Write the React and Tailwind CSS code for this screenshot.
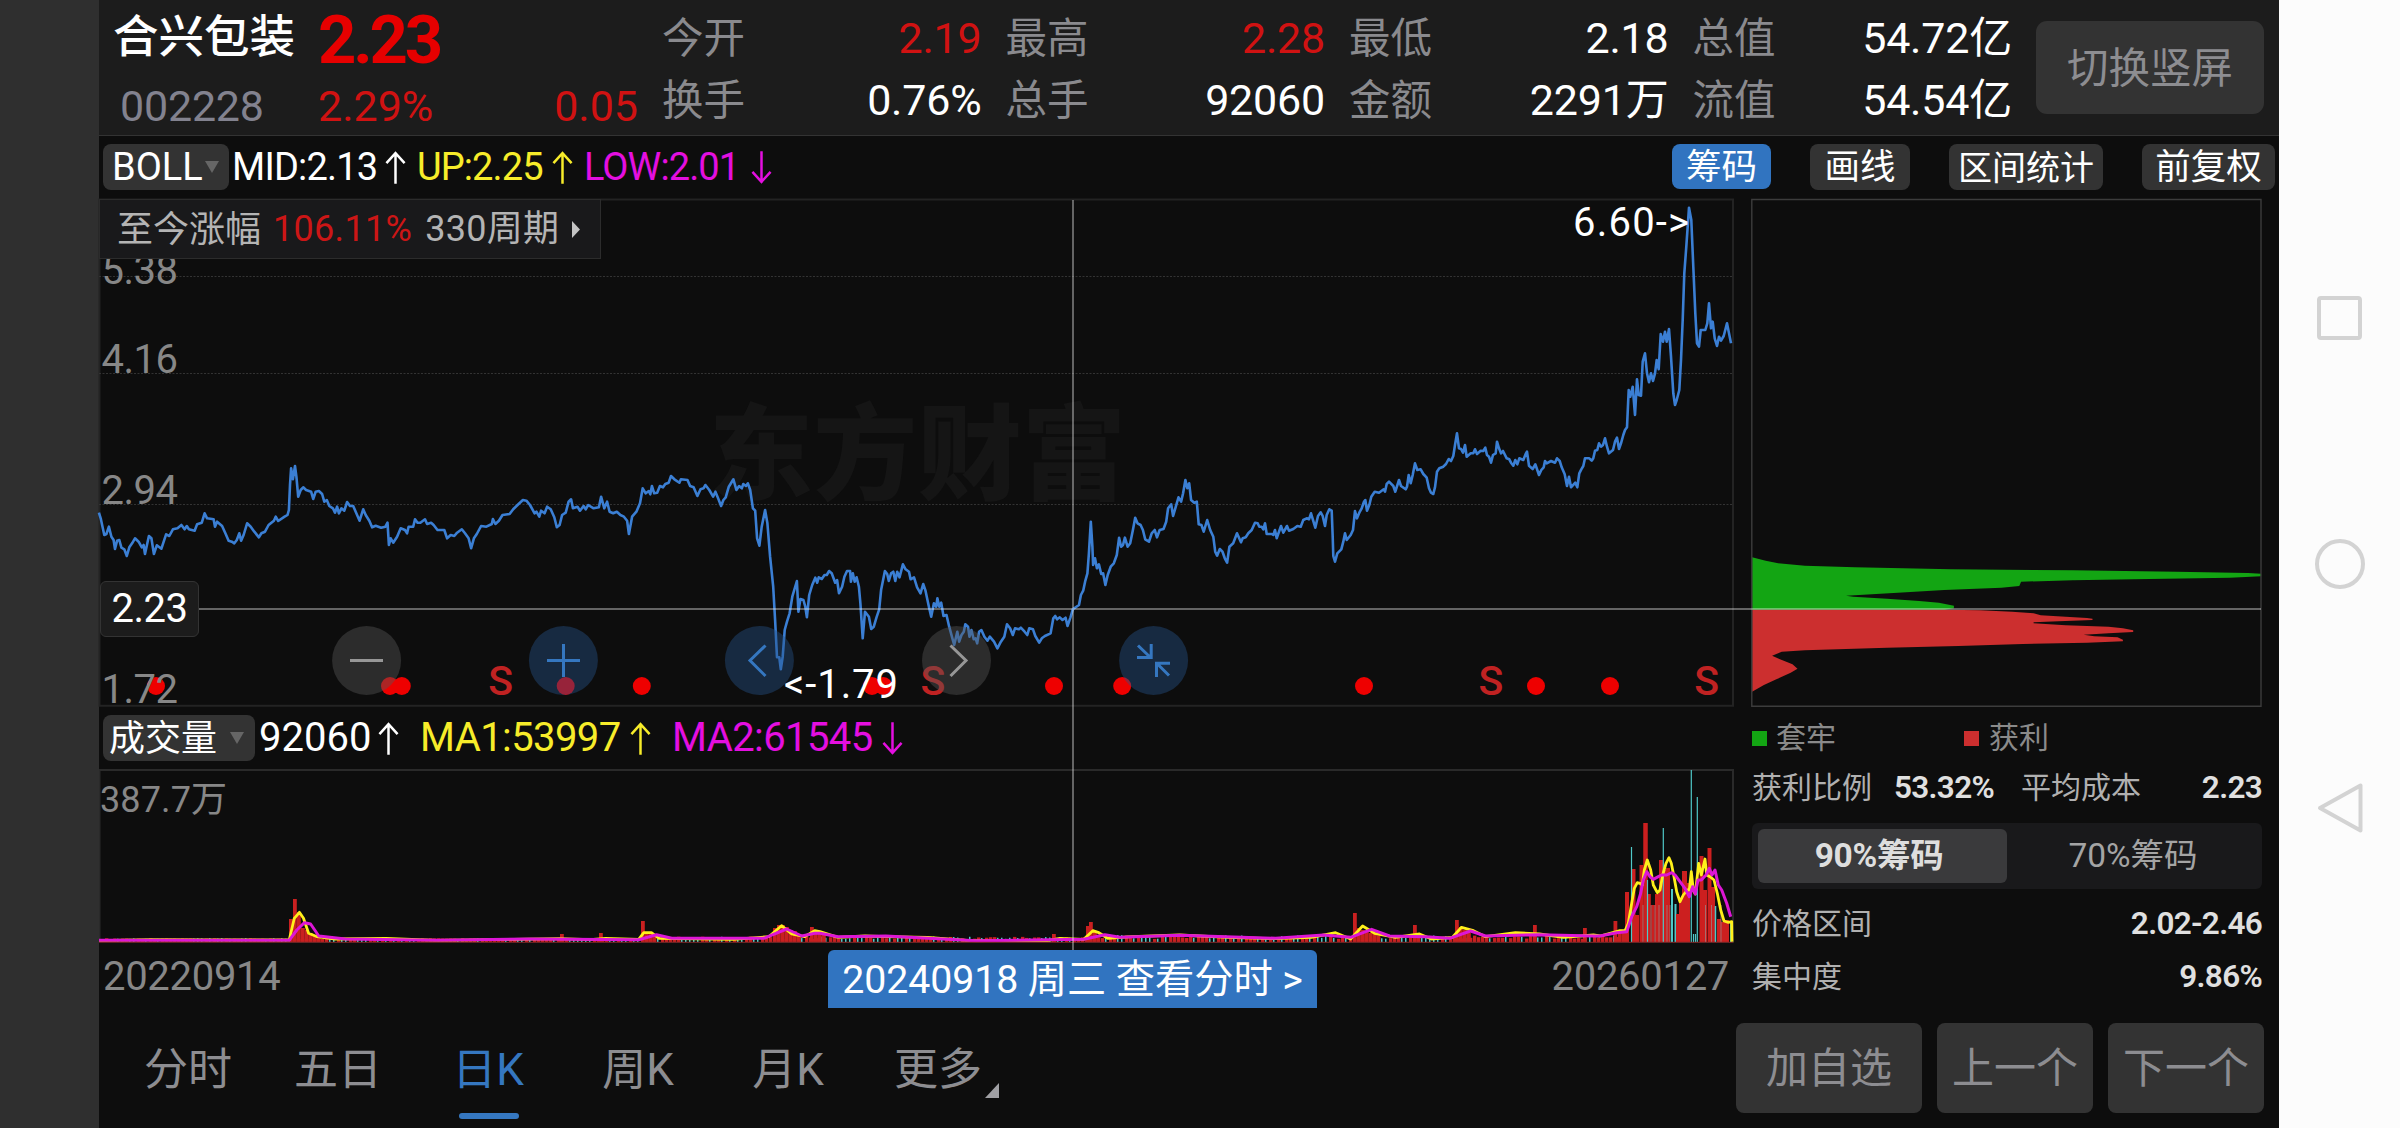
import clsx from 'clsx';

const quotes = [
  { label: '今开', value: '2.19', up: true },
  { label: '最高', value: '2.28', up: true },
  { label: '最低', value: '2.18' },
  { label: '总值', value: '54.72亿' },
  { label: '换手', value: '0.76%' },
  { label: '总手', value: '92060' },
  { label: '金额', value: '2291万' },
  { label: '流值', value: '54.54亿' },
];

const periods = ['分时', '五日', '日K', '周K', '月K', '更多'];

// Each segment has its own origin [ox, oy] and scale [sx, sy]
const priceSegments = [
  {
    frame: [90, 400, 2.8, 3],
    data:
      '25,338 30,355 35,380 40,405 46,402 53,380 60,410 66,420 70,447 76,422 82,420 88,443 96,448 103,468 110,442 118,430 126,415 136,425 145,442 150,435 154,462 165,408 172,415 179,462 187,436 200,446 213,403 222,408 232,388 245,385 256,375 265,388 271,378 277,388 293,392 300,373 313,368 321,340 328,355 346,358 350,380 356,365 370,378 380,402 388,422 397,425 404,430 411,420 418,400 423,422 430,405 440,370 450,380 460,395 473,412 480,400 490,395 500,375 515,362 520,350 527,363 545,350 553,345 557,330 560,255 563,205 568,238 574,198 578,230 583,290 590,270 597,262 605,270 619,275 625,297 632,275 641,273 650,282 656,305 663,300 670,318 680,325 686,338 692,320 697,340 704,325 712,332 720,306 728,318 737,318 748,345 755,362 765,328 772,345 782,362 790,382 800,377 815,383 827,380 833,368 837,435 842,415 849,428 860,410 870,385 882,390 888,400 892,380 905,380 910,358 917,368 925,368 938,358 944,372 955,368 962,375 973,390 992,390 1000,415 1010,405 1020,408 1028,398 1041,388 1050,400 1060,415 1067,445 1075,415 1083,402 1095,378 1110,380 1125,372 1128,357 1135,372 1145,362 1155,345 1175,342 1185,328 1200,312 1212,300 1222,302 1232,315 1245,340 1250,335 1258,350 1263,332 1273,340 1280,320 1290,328 1300,352 1307,382 1315,375 1322,345 1332,338 1340,305 1347,298 1352,325 1365,320 1372,332 1382,318 1388,328 1395,315 1410,325 1425,322 1431,290 1440,325 1448,305 1455,335 1465,340 1475,335 1485,345 1495,350 1504,362 1509,402 1518,350 1530,335 1540,310',
  },
  {
    frame: [640, 380, 2.613, 3],
    data:
      '7,325 15,340 23,333 27,343 31,318 37,340 45,338 52,318 60,322 66,312 75,308 81,288 90,298 103,308 107,298 124,300 131,318 140,322 150,348 158,328 166,325 171,315 181,330 191,350 197,335 204,355 212,378 218,360 224,352 232,320 244,298 252,330 259,318 266,325 270,312 277,318 282,310 288,330 295,385 301,392 306,475 312,497 318,440 327,390 333,430 340,530 348,620 353,720 358,832 364,832 368,868 373,830 378,750 384,725 391,700 398,650 410,603 414,695 419,657 427,660 432,680 436,712 442,645 450,615 458,593 463,608 467,592 475,597 482,585 488,585 494,573 501,580 510,608 515,600 520,640 528,620 534,590 541,573 549,573 551,605 556,580 561,605 566,592 572,620 576,670 582,775 588,695 598,710 604,747 611,740 618,712 625,688 630,630 640,573 646,582 650,603 656,580 662,575 667,603 672,575 678,592 687,553 694,568 703,575 707,598 716,592 724,622 733,640 740,612 746,632 755,680 761,710 768,670 774,680 777,655 782,680 787,668 793,708 801,705 808,740 815,770 821,795 829,755 834,785 840,765 846,755 850,733 857,740 861,770 866,750 872,778 877,775 881,790 886,755 892,750 900,770 908,782 914,770 925,785 934,805 943,785 952,770 959,733 967,745 974,765 980,745 990,748 995,743 1005,755 1012,765 1017,745 1027,748 1033,768 1043,788 1050,775 1058,768 1073,760 1080,715 1085,708 1090,718 1097,712 1104,720 1112,713 1117,738 1125,712 1131,688 1147,675 1152,645 1158,632 1163,605 1169,580 1173,520 1178,425 1182,500 1184,555 1189,535 1194,565 1199,553 1205,582 1210,580 1216,615 1222,585 1230,560 1238,550 1246,525 1252,473 1257,500 1262,495 1267,473 1274,500 1281,490 1288,450 1294,413 1300,430 1308,435 1314,450 1320,478 1330,485 1337,460 1345,450 1351,472 1358,450 1368,447 1375,425 1380,385 1388,373 1393,408 1400,380 1407,352 1414,365 1419,340 1425,300 1430,325 1435,310 1440,360 1448,368 1455,365 1460,433 1467,435 1473,455 1482,420 1490,450 1498,470 1503,515 1508,527 1515,507 1522,515 1528,535 1534,548 1540,500 1550,490 1560,460',
  },
  {
    frame: [1230, 380, 3, 3],
    data:
      '33,487 38,475 47,472 55,460 65,450 75,428 83,430 88,440 95,440 100,448 105,430 110,462 125,462 130,465 135,450 140,475 153,438 160,458 171,438 177,452 190,447 202,438 212,440 220,420 230,415 237,418 243,400 256,443 264,408 272,397 278,408 285,438 290,405 298,388 305,392 308,470 310,528 315,545 322,520 334,508 340,485 345,460 350,480 362,465 369,450 375,393 381,415 388,398 395,385 402,365 406,360 411,392 418,375 424,350 434,335 447,338 461,328 465,335 470,312 477,305 490,318 496,335 507,300 513,318 527,328 531,320 536,285 542,310 548,285 555,250 562,270 572,268 580,282 590,293 597,325 603,338 610,342 615,322 621,275 628,265 640,260 648,252 656,237 663,243 670,228 675,195 681,160 687,205 693,207 699,218 705,195 710,230 722,220 730,220 735,208 741,222 752,212 760,213 766,203 771,225 777,230 783,248 789,225 797,220 801,185 807,205 813,220 819,213 830,235 838,238 843,248 850,257 856,240 862,253 868,235 880,240 887,222 891,215 897,257 908,267 916,253 922,270 927,285 934,270 941,262 945,243 950,250 963,243 975,248 981,235 989,243 995,262 1004,283 1011,318 1017,290 1023,322 1036,308 1042,322 1048,280 1054,268 1060,258 1065,235 1078,235 1085,242 1090,235 1095,212 1102,210 1107,190 1113,200 1119,195 1125,175 1131,200 1137,220 1149,210 1155,185 1161,173 1167,207 1173,190 1180,165 1185,150',
  },
  {
    frame: [1550, 180, 3, 3],
    data:
      '231,742 236,630 241,650 248,620 255,705 261,598 266,645 273,647 278,545 285,520 291,580 297,607 303,580 309,603 315,580 320,540 326,568 332,462 339,485 345,455 350,485 357,447 363,530 370,640 375,675 380,660 388,630 393,540 398,420 403,280 409,200 417,83 424,120 430,260 436,400 441,490 447,500 452,450 466,450 472,430 477,370 483,445 488,425 494,475 501,498 507,470 513,482 521,468 531,430 537,460 543,490',
  },
];

const ma1Segments = [
  {
    frame: [80, 730, 1.96, 3],
    data:
      '37,632 140,629 250,630 410,630 420,565 430,547 438,565 448,610 465,620 500,627 600,625 700,631 850,628 940,626 1000,629 1030,625 1095,628 1105,608 1120,608 1135,625 1280,628 1350,620 1375,587 1395,612 1420,620 1440,602',
  },
  {
    frame: [820, 740, 1.668, 3],
    data:
      '0,575 30,592 75,588 110,590 180,592 250,602 380,602 400,595 440,598 455,572 465,578 480,595 520,590 600,585 680,592 760,596 820,592 860,578 885,597 905,558 925,580 960,592 1000,582 1020,597 1055,592 1070,562 1090,572 1110,590 1160,578 1200,582 1240,592 1290,585',
  },
  {
    frame: [1600, 760, 3, 3],
    data:
      '0,528 30,520 60,512 75,512 85,490 95,430 103,385 112,368 120,370 127,375 133,330 142,300 152,330 160,375 172,398 180,390 188,345 198,310 207,293 214,310 222,350 230,395 240,425 250,405 262,390 268,390 274,335 280,390 286,402 296,310 304,345 315,297 320,345 330,350 342,360 352,400 362,450 372,483 385,487 395,485 396,545',
  },
];

const ma2Segments = [
  {
    frame: [80, 730, 1.96, 3],
    data:
      '37,631 410,631 425,600 440,578 452,582 468,618 520,627 700,631 880,627 1095,629 1130,614 1160,625 1340,625 1385,597 1415,618 1440,610',
  },
  {
    frame: [820, 740, 1.668, 3],
    data:
      '0,580 30,590 110,588 260,602 440,598 475,584 500,592 600,586 760,595 840,585 885,592 920,568 950,588 1010,590 1050,595 1085,573 1110,588 1200,584 1290,588',
  },
  {
    frame: [1600, 760, 3, 3],
    data:
      '0,528 50,518 80,515 95,470 110,440 122,400 130,360 140,335 150,350 160,358 175,350 185,345 200,345 215,338 225,345 240,365 255,385 268,410 278,380 286,402 294,360 304,360 318,345 328,325 336,345 345,330 355,375 365,390 380,430 392,470',
  },
];

const trappedChips = {
  frame: [1730, 540, 2.8, 3],
  data:
    '62,52 100,62 135,70 210,77 350,82 620,88 960,91 1250,95 1450,99 1487,101 1487,109 1400,113 1130,118 960,121 815,125 810,138 760,143 600,150 470,158 325,167 345,170 440,176 530,183 585,188 627,197 627,205 600,209 62,209',
};

const profitChips = {
  frame: [1730, 540, 2.8, 3],
  data:
    '62,209 600,209 700,211 790,215 850,220 870,226 940,230 1000,234 1015,236 1015,240 920,244 850,247 850,250 940,256 1060,260 1100,265 1129,271 1129,276 1060,280 990,284 1020,289 1085,292 1100,299 1100,304 1000,308 820,312 640,318 440,323 210,331 145,335 118,347 140,358 175,373 189,386 170,398 130,418 95,435 62,455',
};

const toPoints = ({ frame: [ox, oy, sx, sy], data }) =>
  data
    .split(' ')
    .map((pair) => {
      const [x, y] = pair.split(',').map(Number);
      return `${(ox + x / sx).toFixed(1)},${(oy + y / sy).toFixed(1)}`;
    })
    .join(' ');

const joinSegments = (segments) => segments.map(toPoints).join(' ');

const dots = [156, 390, 401.8, 565.7, 641.8, 872, 883.4, 1054, 1122.2, 1364, 1536, 1610];
const sellMarks = [500.7, 932.8, 1491, 1706.7];

// [x, height] of the larger volume days
const volumeSpikes = [
  [291, 23], [295, 43], [299, 30], [303, 14], [307, 12], [311, 9], [315, 7], [319, 6], [562, 8], [601, 9],
  [643, 21], [647, 9], [651, 10], [775, 14], [779, 17], [783, 17], [787, 15], [791, 12], [795, 11], [799, 8],
  [812, 15], [816, 12], [820, 10], [824, 8], [1054, 8], [1088, 16], [1091, 20], [1095, 11], [1355, 29],
  [1359, 14], [1363, 12], [1367, 10], [1371, 9], [1375, 8], [1415, 17], [1457, 22], [1461, 15], [1465, 12],
  [1469, 9], [1535, 17], [1585, 14], [1615.5, 21], [1620, 12], [1624, 10],
];

// [x, top, isDown, width]
const surge = [
  [1627, 892, false, 4], [1633.5, 869, false, 4], [1637, 915, false, 4], [1641.5, 865, false, 4],
  [1645.5, 823, false, 4.5], [1649, 894, false, 3.6], [1653, 905, false, 3.6], [1657, 894, false, 4],
  [1661, 860, false, 4], [1664, 870, false, 4], [1668, 868, false, 4], [1672, 889, true, 2],
  [1675.5, 904, true, 2], [1678, 914, false, 4], [1681, 900, false, 4], [1684.5, 871, false, 5],
  [1688, 883, false, 4], [1701.5, 856, false, 4], [1705, 890, false, 4], [1709.5, 848, false, 4],
  [1713, 887, false, 4], [1715.5, 906, true, 1.5], [1719, 919, false, 4], [1723, 922, false, 4],
  [1727, 920, false, 4], [1731, 923, true, 2],
];

const surgeLines = [
  [1631.5, 847], [1647.5, 880], [1663.3, 828], [1691.3, 770], [1697.3, 797], [1693.5, 934], [1695.5, 934],
];

const smallBars = Array.from({ length: 380 }, (_, i) => {
  const x = 101 + i * 4;
  const noise = Math.abs(Math.sin(i * 12.9898) * 43758.5453) % 1;
  const active = x > 1090 ? 4 : x > 640 ? 2.5 : 0.8;
  return { x, h: 3 + noise * active, down: noise * 10 % 1 > 0.62 };
});

const Arrow = ({ down, className }) => (
  <svg viewBox="0 0 22 34" className={clsx('h-[33px] w-[21px] shrink-0', down && 'rotate-180', className)} fill="none" stroke="currentColor" strokeWidth="2.6">
    <path d="M11 34V2M1.5 12.5 11 2l9.500 10.500" />
  </svg>
);

const Caret = () => (
  <svg viewBox="0 0 14 12" className="h-3 w-[14px] shrink-0" fill="#666">
    <path d="M0 0h14L7 12z" />
  </svg>
);

const Header = () => (
  <header className="flex h-[136px] shrink-0 border-b border-[#333] bg-[#1c1c1c]">
    <div className="w-[563px] pl-[14px]">
      <div className="flex h-[74px] items-center">
        <span className="w-[205px] pt-[2px] text-[45.500px] font-medium leading-none text-white">合兴包装</span>
        <span className="pt-[7px] text-[67px] font-bold leading-none tracking-[-3.200px] text-[#e60000]">2.23</span>
      </div>
      <div className="mt-[6px] flex h-[52px] items-center text-[43px] leading-none text-[#d01212]">
        <span className="w-[205px] pl-[7px] tracking-[-0.200px] text-[#82828f]">002228</span>
        <span>2.29%</span>
        <span className="ml-auto pr-[24px]">0.05</span>
      </div>
    </div>
    <div className="grid w-[1374px] grid-cols-4 grid-rows-[62px_62px] pt-[7px] leading-none">
      {quotes.map((quote) => (
        <div key={quote.label} className="flex items-center justify-between pr-[24px]">
          <span className="pt-[2px] text-[41.500px] text-[#8a8a8e]">{quote.label}</span>
          <span className={clsx('text-[43px] tracking-[-0.200px]', quote.up ? 'text-[#d01212]' : 'text-white')}>{quote.value}</span>
        </div>
      ))}
    </div>
    <button type="button" className="mt-[21px] h-[93px] w-[228px] rounded-[11px] bg-[#333] pt-[3px] text-[41.500px] leading-none text-[#8d8d91]">
      切换竖屏
    </button>
  </header>
);

const Toolbar = () => (
  <div className="flex h-[62px] shrink-0 items-center pl-1 text-[38px] leading-none">
    <div className="flex h-[46px] w-[126px] items-center gap-[2px] rounded-lg bg-[#333] pl-[9px] text-white">
      BOLL
      <Caret />
    </div>
    <div className="ml-[3px] flex w-[185px] items-center tracking-[-0.800px] text-white">
      MID:2.13
      <Arrow className="ml-[8px]" />
    </div>
    <div className="flex w-[167px] items-center tracking-[-0.900px] text-[#f7ec2a]">
      UP:2.25
      <Arrow className="ml-[9px]" />
    </div>
    <div className="flex items-center tracking-[-0.900px] text-[#e40fe0]">
      LOW:2.01
      <Arrow down className="ml-[12px]" />
    </div>
    <div className="ml-auto flex pr-[4px] text-[35.500px] text-white">
      <button type="button" className="mr-[39px] h-[45px] w-[99px] rounded-lg bg-[#3174c0] pt-[2px]">筹码</button>
      <button type="button" className="mr-[39px] h-[46px] w-[100px] rounded-lg bg-[#333] pt-[2px]">画线</button>
      <button type="button" className="mr-[39px] h-[46px] w-[154px] rounded-lg bg-[#333] pt-[2px] text-[34px]">区间统计</button>
      <button type="button" className="h-[46px] w-[133px] rounded-lg bg-[#333] pt-[2px]">前复权</button>
    </div>
  </div>
);

const CircleButton = ({ cx, muted, children }) => (
  <g stroke={muted ? '#979797' : '#3577c0'} strokeWidth="3" fill="none">
    <circle cx={cx} cy="660.500" r="34.500" stroke="none" fill={muted ? '#555' : '#245086'} fillOpacity="0.43" />
    {children}
  </g>
);

const PriceChart = () => (
  <div className="relative h-[508px]">
    <svg viewBox="99 198 1635 508" className="block h-[508px] w-[1635px] overflow-visible">
      <text x="709" y="492" fontSize="104" fontWeight="900" fill="#151515" textLength="417">东方财富</text>
      <path d="M99.500 199.500H1733V705.700H99.500z" fill="none" stroke="#232323" strokeWidth="2" />
      <path d="M99 276.500H1733M99 373.500H1733M99 504.500H1733" stroke="#333" strokeWidth="1" strokeDasharray="2 1.500" />
      <polyline points={joinSegments(priceSegments)} fill="none" stroke="#3b7fd4" strokeWidth="2.600" strokeLinejoin="round" />
      <g fill="#ee0000">
        {dots.map((x) => (
          <circle key={x} cx={x} cy="686" r="9" />
        ))}
      </g>
      <g fill="#c02222" fontSize="41" fontWeight="500" textAnchor="middle">
        {sellMarks.map((x) => (
          <text key={x} x={x} y="695">S</text>
        ))}
      </g>
      <g fill="#878787" fontSize="40" letterSpacing="-0.5">
        <text x="101.500" y="284">5.38</text>
        <text x="101.500" y="373">4.16</text>
        <text x="101.500" y="504">2.94</text>
        <text x="101.500" y="703">1.72</text>
      </g>
      <CircleButton cx={366.6} muted>
        <path d="M350 660.500h33" />
      </CircleButton>
      <CircleButton cx={563.4}>
        <path d="M547 660.500h33M563.500 644v33" />
      </CircleButton>
      <CircleButton cx={759.4}>
        <path d="M765.500 645.500 750 660.500l15.500 15.500" />
      </CircleButton>
      <CircleButton cx={956.5} muted>
        <path d="M950.500 645.500 966 660.500 950.500 676" />
      </CircleButton>
      <CircleButton cx={1153.6}>
        <path d="M1138 645.500 1151 658M1137 657.500h14.200V644M1169 675.500l-12-12M1170 663.300h-13.500V677" />
      </CircleButton>
      <g fill="#fff" fontSize="40">
        <text x="784" y="698" textLength="114">&lt;-1.79</text>
        <text x="1573" y="235.500" textLength="116">6.60-&gt;</text>
      </g>
      <path d="M1073 200V768M199 609H1751" stroke="#fff" strokeOpacity="0.360" strokeWidth="2" />
    </svg>
    <div className="absolute left-0 top-px flex h-[60px] w-[502px] items-center border border-[#2c2c2c] bg-[#19191b] pl-[17px] text-[36px] leading-none text-[#b4b4b4]">
      <span className="pt-[2px]">至今涨幅</span>
      <span className="ml-[12px] tracking-[0.300px] text-[#cc1616]">106.11%</span>
      <span className="ml-[13px] tracking-[0.300px]">330周期</span>
      <svg viewBox="0 0 8 17" className="ml-[13px] h-[17px] w-2" fill="#c4c4c4">
        <path d="M0 0v17l8-8.500z" />
      </svg>
    </div>
    <div className="absolute left-px top-[383px] flex h-[56px] w-[99px] items-center justify-center rounded-md border border-[#333] bg-[#1c1c1c] text-[40px] leading-none tracking-[-0.500px] text-white">
      2.23
    </div>
  </div>
);

const VolumeChart = () => (
  <div className="relative">
    <div className="flex h-[63px] items-center pl-1 pt-px text-[40px] leading-none">
      <div className="flex h-[46px] w-[152px] items-center gap-[13px] rounded-lg bg-[#333] pl-[6px] text-[36px] text-white">
        <span className="pt-[2px]">成交量</span>
        <Caret />
      </div>
      <div className="ml-[4px] flex w-[161px] items-center text-white">
        92060
        <Arrow className="ml-[7px]" />
      </div>
      <div className="flex w-[252px] items-center tracking-[-0.600px] text-[#f7ec2a]">
        MA1:53997
        <Arrow className="ml-[9px]" />
      </div>
      <div className="flex items-center tracking-[-0.600px] text-[#e40fe0]">
        MA2:61545
        <Arrow down className="ml-[9px]" />
      </div>
    </div>
    <svg viewBox="99 769 1635 174" className="block h-[174px] w-[1635px]">
      <path d="M99.500 770H1733V943H99.500z" fill="none" stroke="#2a2a2a" strokeWidth="2" />
      {smallBars.map((bar) => (
        <rect key={bar.x} x={bar.x} y={942 - bar.h} width={bar.down ? 1.5 : 3.4} height={bar.h} fill={bar.down ? '#4fc8c8' : '#c92020'} />
      ))}
      {volumeSpikes.map(([x, h]) => (
        <rect key={x} x={x - 2} y={942 - h} width="3.800" height={h} fill="#c92020" />
      ))}
      {surge.map(([x, top, isDown, width]) => (
        <rect key={x} x={x - width / 2} y={top} width={width} height={942 - top} fill={isDown ? '#4fc8c8' : '#cc1f1f'} />
      ))}
      <g stroke="#a08080" strokeWidth="0.800">
        {[1643, 1651, 1655, 1659, 1667, 1670, 1705.5, 1711.5, 1721].map((x) => (
          <path key={x} d={`M${x} 905V942`} />
        ))}
      </g>
      <g stroke="#4fc8c8" strokeWidth="1.200">
        {surgeLines.map(([x, top]) => (
          <path key={x} d={`M${x} ${top}V942`} />
        ))}
      </g>
      <polyline points={joinSegments(ma1Segments)} fill="none" stroke="#fff01a" strokeWidth="2.800" strokeLinejoin="round" />
      <polyline points={joinSegments(ma2Segments)} fill="none" stroke="#dd16d6" strokeWidth="3" strokeLinejoin="round" />
      <path d="M99 942.300H1733" stroke="#7a2424" strokeWidth="1" />
      <text x="100" y="812" fontSize="36" fill="#878787" textLength="127">387.7万</text>
    </svg>
    <span className="absolute left-[973px] top-[62px] h-[182px] w-[2px] bg-white/36" />
    <div className="relative flex h-[66px] items-start justify-between pl-[4px] pr-[5px] text-[40px] leading-none tracking-[-0.300px] text-[#878787]">
      <span className="mt-[14px]">20220914</span>
      <button type="button" className="absolute left-[729px] top-[7px] h-[58px] w-[489px] rounded-t-md bg-[#3174c0] pt-[3px] text-[39.300px] leading-none tracking-[-0.100px] text-white">
        20240918 周三 查看分时 &gt;
      </button>
      <span className="mt-[14px]">20260127</span>
    </div>
  </div>
);

const ChipRow = ({ label, value }) => (
  <div className="flex items-center justify-between text-[30px] text-[#b0b0b0]">
    <span className="pt-[2px]">{label}</span>
    <span className="pt-px text-[31.500px] font-semibold tracking-[-0.700px] text-[#e0e0e0]">{value}</span>
  </div>
);

const ChipPanel = () => (
  <aside className="ml-[17px] w-[511px] leading-none">
    <svg viewBox="1751 198 511 509" className="block h-[509px] w-[511px]">
      <polygon points={toPoints(trappedChips)} fill="#13a513" />
      <polygon points={toPoints(profitChips)} fill="#cc2f2f" />
      <path d="M1751.800 199.500H2261V706.300H1751.800z" fill="none" stroke="#3c3c3c" strokeWidth="1.400" />
      <path d="M1751 609H2261" stroke="#fff" strokeOpacity="0.360" strokeWidth="2" />
    </svg>
    <div className="flex h-[62px] items-center pl-px text-[30px] text-[#8a8a8a]">
      <span className="size-[15px] bg-[#13a513]" />
      <span className="ml-[9px] w-[188px]">套牢</span>
      <span className="size-[15px] bg-[#cc2f2f]" />
      <span className="ml-[10px]">获利</span>
    </div>
    <div className="flex h-[36px] items-center gap-[27px] pl-px">
      <div className="w-[242px]">
        <ChipRow label="获利比例" value="53.32%" />
      </div>
      <div className="flex-1">
        <ChipRow label="平均成本" value="2.23" />
      </div>
    </div>
    <div className="ml-px mt-[18px] flex h-[66px] rounded-md bg-[#19191b] p-[6px] text-[33.500px]">
      <button type="button" className="w-[249px] rounded-md bg-[#3a3a3c] pr-[7px] font-bold tracking-[-0.300px] text-[#dedede]">90%筹码</button>
      <button type="button" className="flex-1 pl-[3px] text-[#a4a4a4]">70%筹码</button>
    </div>
    <div className="mt-[18px] flex flex-col gap-[20px] pl-px">
      <ChipRow label="价格区间" value="2.02-2.46" />
      <ChipRow label="集中度" value="9.86%" />
    </div>
  </aside>
);

const Footer = () => (
  <footer className="flex flex-1 items-start pl-[14px] pr-[15px] pt-[14px] text-[44px] leading-none text-[#8d8d91]">
    <nav className="flex">
      {periods.map((period) => {
        const active = period === '日K';
        return (
          <button key={period} type="button" className={clsx('relative h-[96px] w-[150px] pb-[2px]', active && 'text-[#3577c0]')}>
            {period}
            {active ? <span className="absolute bottom-0 left-[46px] h-[6px] w-[60px] rounded-full bg-[#3577c0]" /> : null}
            {period === '更多' ? (
              <svg viewBox="0 0 14 15" className="absolute bottom-[21px] right-[14px] h-[15px] w-[14px]" fill="#a0a0a4">
                <path d="M14 0v15H0z" />
              </svg>
            ) : null}
          </button>
        );
      })}
    </nav>
    <div className="ml-auto flex gap-[15px] text-[42px]">
      <button type="button" className="h-[90px] w-[186px] rounded-lg bg-[#333] pt-[2px]">加自选</button>
      <button type="button" className="h-[90px] w-[156px] rounded-lg bg-[#333] pt-[2px]">上一个</button>
      <button type="button" className="h-[90px] w-[156px] rounded-lg bg-[#333] pt-[2px]">下一个</button>
    </div>
  </footer>
);

const SystemBar = () => (
  <div className="flex w-[121px] flex-col items-center bg-[#fcfcfc] pt-[294px]">
    <svg viewBox="0 0 54 540" className="h-[540px] w-[54px]" fill="none" stroke="#d3d3d3" strokeWidth="4" strokeLinejoin="round">
      <rect x="6" y="4" width="41" height="40" rx="2" />
      <circle cx="27" cy="270" r="23" />
      <path d="M47.500 491.500v45L7 514z" />
    </svg>
  </div>
);

const App = () => (
  <div className="flex h-[1128px] w-[2400px] overflow-hidden whitespace-nowrap bg-[#0d0d0d] font-['Roboto','Noto_Sans_CJK_SC',sans-serif]">
    <div className="w-[99px] bg-[#2f2f2f]" />
    <main className="flex w-[2180px] flex-col">
      <Header />
      <Toolbar />
      <div className="flex h-[811px] shrink-0">
        <div className="w-[1635px]">
          <PriceChart />
          <VolumeChart />
        </div>
        <ChipPanel />
      </div>
      <Footer />
    </main>
    <SystemBar />
  </div>
);

export default App;
